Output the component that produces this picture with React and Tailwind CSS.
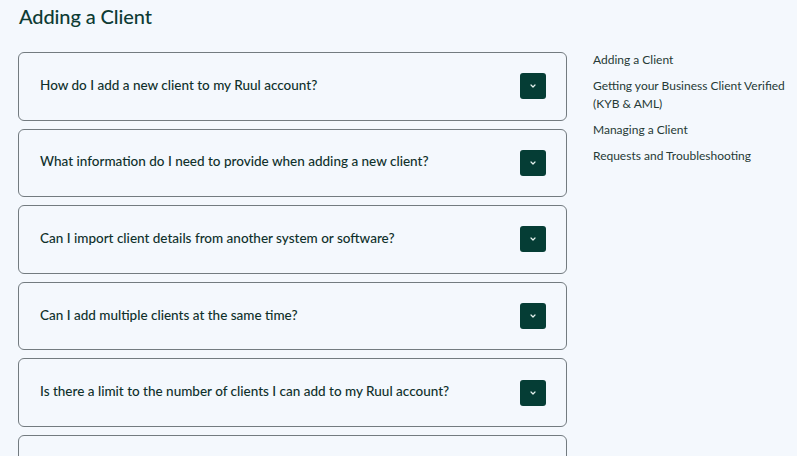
import React from "react";

const questions = [
  "How do I add a new client to my Ruul account?",
  "What information do I need to provide when adding a new client?",
  "Can I import client details from another system or software?",
  "Can I add multiple clients at the same time?",
  "Is there a limit to the number of clients I can add to my Ruul account?",
  "How do I edit a client's details after adding them?",
];

const links = [
  "Adding a Client",
  "Getting your Business Client Verified (KYB & AML)",
  "Managing a Client",
  "Requests and Troubleshooting",
];

function Chevron() {
  return (
    <svg width="8" height="6" viewBox="0 0 8 6" fill="none">
      <path d="M2 2l2 2 2-2" stroke="#e6f2ef" strokeWidth="1.2" strokeLinecap="round" strokeLinejoin="round" />
    </svg>
  );
}

export default function App() {
  return (
    <div className="w-[797px] h-[456px] overflow-hidden bg-[#f4f8fd] font-['Lato',_sans-serif]">
      <div className="flex pl-[18px] gap-[26px]">
        <div className="w-[549px] shrink-0">
          <h1 className="pt-[2px] pl-[1px] text-[20px] leading-[28px] font-medium text-[#0d3b34] tracking-[-0.1px]">
            Adding a Client
          </h1>
          <div className="mt-[22px] flex flex-col gap-[8px]">
            {questions.map((q) => (
              <div
                key={q}
                className="h-[68.6px] shrink-0 rounded-[6px] border border-[#737b80] flex items-center justify-between pl-[21px] pr-[20px]"
              >
                <span className="text-[13.5px] leading-[20px] pb-[3px] text-[#0f302b] font-medium">{q}</span>
                <span className="w-[26px] h-[26px] rounded-[3px] bg-[#053d35] flex items-center justify-center">
                  <Chevron />
                </span>
              </div>
            ))}
          </div>
        </div>
        <div className="pt-[51px] w-[200px] flex flex-col gap-[8px]">
          {links.map((l) => (
            <div key={l} className="text-[12px] leading-[18px] text-[#263a36]">
              {l}
            </div>
          ))}
        </div>
      </div>
    </div>
  );
}
